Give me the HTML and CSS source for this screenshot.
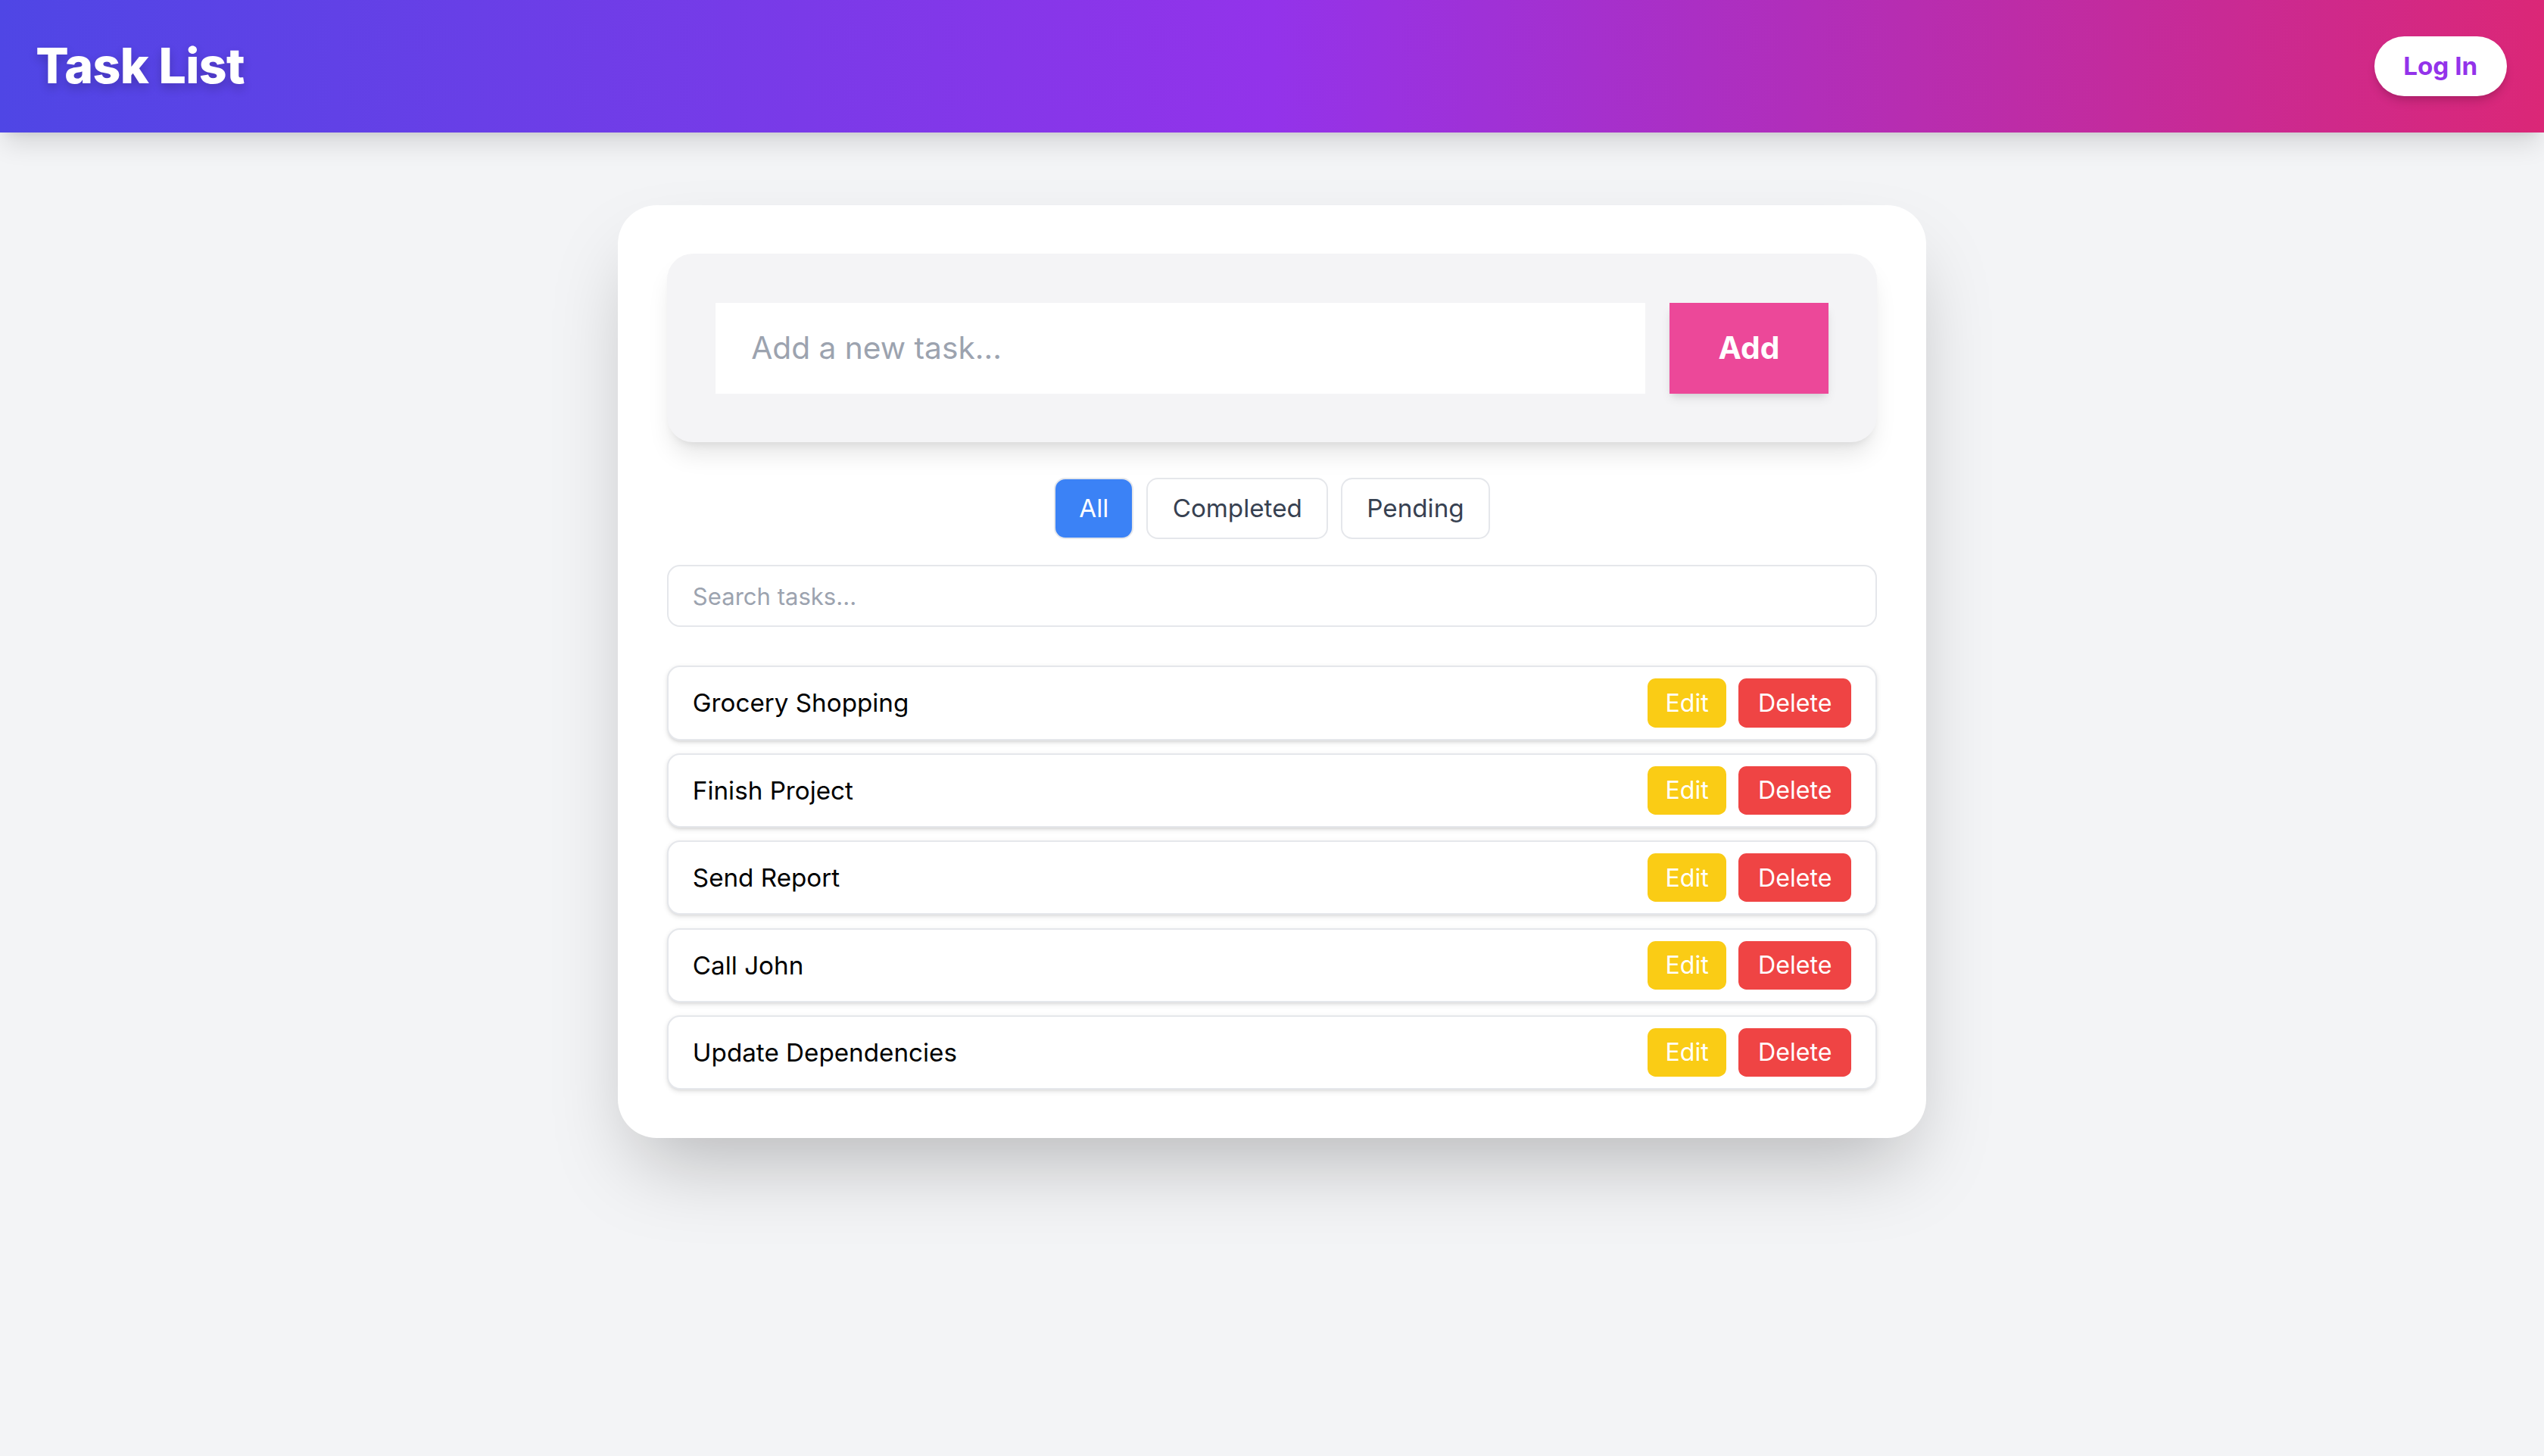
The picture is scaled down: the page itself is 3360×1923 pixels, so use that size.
FILE: index.html
```html
<!DOCTYPE html>
<html lang="en">
<head>
<meta charset="utf-8">
<title>Task List</title>
<link rel="stylesheet" href="styles.css">
</head>
<body>
<header class="topbar">
  <h1 class="brand">Task List</h1>
  <button class="login">Log In</button>
</header>
<main class="page">
  <section class="card">
    <div class="composer">
      <input class="new-task" type="text" placeholder="Add a new task...">
      <button class="add-btn">Add</button>
    </div>
    <div class="filters">
      <button class="filter active">All</button>
      <button class="filter">Completed</button>
      <button class="filter">Pending</button>
    </div>
    <input class="search" type="text" placeholder="Search tasks...">
    <ul class="tasks">
      <li class="task"><span class="task-name">Grocery Shopping</span><div class="actions"><button class="edit">Edit</button><button class="delete">Delete</button></div></li>
      <li class="task"><span class="task-name">Finish Project</span><div class="actions"><button class="edit">Edit</button><button class="delete">Delete</button></div></li>
      <li class="task"><span class="task-name">Send Report</span><div class="actions"><button class="edit">Edit</button><button class="delete">Delete</button></div></li>
      <li class="task"><span class="task-name">Call John</span><div class="actions"><button class="edit">Edit</button><button class="delete">Delete</button></div></li>
      <li class="task"><span class="task-name">Update Dependencies</span><div class="actions"><button class="edit">Edit</button><button class="delete">Delete</button></div></li>
    </ul>
  </section>
</main>
</body>
</html>
```
FILE: styles.css
```css
html {
  zoom: 2.142857;
  background: #f3f4f6;
}
* {
  box-sizing: border-box;
}
body {
  margin: 0;
  background: #f3f4f6;
  font-family: "Inter", "Open Sans", "Liberation Sans", sans-serif;
  color: #111;
}
button, input {
  font-family: inherit;
}
.topbar {
  height: 81.5px;
  display: flex;
  align-items: center;
  justify-content: space-between;
  padding: 0 23px 0 22px;
  background: linear-gradient(to right, #4f46e5, #9333ea, #db2777);
  box-shadow: 0 10px 15px -3px rgba(0,0,0,0.12), 0 4px 6px -4px rgba(0,0,0,0.1);
  position: relative;
  z-index: 1;
}
.brand {
  margin: 0;
  font-size: 30px;
  font-weight: 800;
  color: #fff;
  letter-spacing: -0.3px;
  text-shadow: 0 3px 6px rgba(0,0,0,0.2);
}
.login {
  border: none;
  background: #fff;
  color: #9333ea;
  font-size: 15.5px;
  font-weight: 700;
  line-height: 25px;
  padding: 6px 18px;
  border-radius: 9999px;
  box-shadow: 0 4px 6px -1px rgba(0,0,0,0.15), 0 2px 4px -2px rgba(0,0,0,0.1);
}
.page {
  padding: 45px 0 80px;
}
.card {
  width: 806px;
  margin: 0 auto;
  padding: 30px;
  background: #fff;
  border-radius: 24px;
  box-shadow: 0 25px 50px -12px rgba(0,0,0,0.25);
}
.composer {
  display: flex;
  gap: 15px;
  padding: 30px;
  background: #f4f4f6;
  border-radius: 16px;
  box-shadow: 0 10px 15px -3px rgba(0,0,0,0.1), 0 4px 6px -4px rgba(0,0,0,0.1);
}
.new-task {
  flex: 1;
  height: 56px;
  border: none;
  outline: none;
  background: #fff;
  padding: 0 22px;
  font-size: 19px;
  color: #111;
}
.new-task::placeholder {
  color: #9ca3af;
}
.add-btn {
  width: 98px;
  height: 56px;
  border: none;
  background: #ec4899;
  color: #fff;
  font-size: 19px;
  font-weight: 700;
  box-shadow: 0 4px 6px -1px rgba(0,0,0,0.1), 0 2px 4px -2px rgba(0,0,0,0.1);
}
.filters {
  margin-top: 22px;
  display: flex;
  justify-content: center;
  gap: 8px;
}
.filter {
  border: 1px solid #e5e7eb;
  background: #fff;
  color: #374151;
  font-size: 15.5px;
  line-height: 24px;
  padding: 6px 15px;
  border-radius: 7px;
}
.filter.active {
  background: #3b82f6;
  color: #fff;
  padding: 6px 14.5px;
}
.search {
  display: block;
  width: 100%;
  margin-top: 16px;
  height: 38px;
  border: 1px solid #e5e7eb;
  border-radius: 8px;
  padding: 0 15px;
  font-size: 14.5px;
  outline: none;
}
.search::placeholder {
  color: #9ca3af;
}
.tasks {
  list-style: none;
  margin: 24px 0 0;
  padding: 0;
  display: flex;
  flex-direction: column;
  gap: 8px;
}
.task {
  display: flex;
  align-items: center;
  justify-content: space-between;
  padding: 7px 15px;
  border: 1px solid #e5e7eb;
  border-radius: 8px;
  background: #fff;
  box-shadow: 0 1px 3px rgba(0,0,0,0.1), 0 1px 2px -1px rgba(0,0,0,0.1);
}
.task-name {
  font-size: 15.5px;
  color: #000;
}
.actions {
  display: flex;
  gap: 7.5px;
}
.edit, .delete {
  border: none;
  color: #fff;
  font-size: 15px;
  line-height: 22px;
  padding: 4px 11px;
  border-radius: 5px;
}
.edit {
  background: #facc15;
}
.delete {
  background: #ef4444;
  padding: 4px 12px;
}
```
